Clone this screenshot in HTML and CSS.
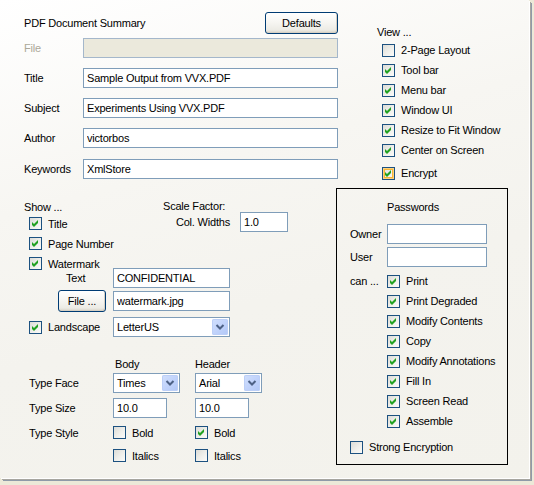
FILE: index.html
```html
<!DOCTYPE html>
<html>
<head>
<meta charset="utf-8">
<link rel="stylesheet" href="styles.css">
</head>
<body>
<div class="panel">
  <div class="top">
    <div class="summary">
      <div class="head-row"><span>PDF Document Summary</span><button class="btn btn-defaults">Defaults</button></div>
      <div class="field field-first disabled"><label>File</label><input class="txt txt-long" value="" disabled></div>
      <div class="field"><label>Title</label><input class="txt txt-long" value="Sample Output from VVX.PDF"></div>
      <div class="field"><label>Subject</label><input class="txt txt-long" value="Experiments Using VVX.PDF"></div>
      <div class="field"><label>Author</label><input class="txt txt-long" value="victorbos"></div>
      <div class="field field-last"><label>Keywords</label><input class="txt txt-long" value="XmlStore"></div>
    </div>
    <div class="view">
      <div class="view-title">View ...</div>
      <div class="cb-row"><span class="cb"></span><span>2-Page Layout</span></div>
      <div class="cb-row"><span class="cb on"><svg viewBox="0 0 11 11"><polygon points="2,4 4,6 8,2 8,5 4,9 2,7"/></svg></span><span>Tool bar</span></div>
      <div class="cb-row"><span class="cb on"><svg viewBox="0 0 11 11"><polygon points="2,4 4,6 8,2 8,5 4,9 2,7"/></svg></span><span>Menu bar</span></div>
      <div class="cb-row"><span class="cb on"><svg viewBox="0 0 11 11"><polygon points="2,4 4,6 8,2 8,5 4,9 2,7"/></svg></span><span>Window UI</span></div>
      <div class="cb-row"><span class="cb on"><svg viewBox="0 0 11 11"><polygon points="2,4 4,6 8,2 8,5 4,9 2,7"/></svg></span><span>Resize to Fit Window</span></div>
      <div class="cb-row"><span class="cb on"><svg viewBox="0 0 11 11"><polygon points="2,4 4,6 8,2 8,5 4,9 2,7"/></svg></span><span>Center on Screen</span></div>
      <div class="cb-row cb-row-encrypt"><span class="cb on hot"><svg viewBox="0 0 11 11"><polygon points="2,4 4,6 8,2 8,5 4,9 2,7"/></svg></span><span>Encrypt</span></div>
    </div>
  </div>
  <div class="bottom">
    <div class="options">
      <div class="show-block">
        <div class="show-col">
          <div class="group-title">Show ...</div>
          <div class="cb-line cb-line-first"><span class="cb on"><svg viewBox="0 0 11 11"><polygon points="2,4 4,6 8,2 8,5 4,9 2,7"/></svg></span><span>Title</span></div>
          <div class="cb-line"><span class="cb on"><svg viewBox="0 0 11 11"><polygon points="2,4 4,6 8,2 8,5 4,9 2,7"/></svg></span><span>Page Number</span></div>
          <div class="cb-line"><span class="cb on"><svg viewBox="0 0 11 11"><polygon points="2,4 4,6 8,2 8,5 4,9 2,7"/></svg></span><span>Watermark</span></div>
        </div>
        <div class="scale-col">
          <div class="scale-title">Scale Factor:</div>
          <div class="scale-row"><span>Col. Widths</span><input class="txt txt-scale" value="1.0"></div>
        </div>
      </div>
      <div class="row row-text"><span class="lead lead-text">Text</span><input class="txt txt-mid" value="CONFIDENTIAL"></div>
      <div class="row row-file"><span class="lead lead-file"><button class="btn btn-file">File ...</button></span><input class="txt txt-mid" value="watermark.jpg"></div>
      <div class="row row-land"><span class="lead lead-cb"><span class="cb on"><svg viewBox="0 0 11 11"><polygon points="2,4 4,6 8,2 8,5 4,9 2,7"/></svg></span><span>Landscape</span></span>
        <div class="select sel-mid"><span class="val">LetterUS</span><span class="drop"><svg viewBox="0 0 16 16"><polyline points="4.5,6 8,9.5 11.5,6"/></svg></span></div>
      </div>
      <div class="row row-colhead"><span class="lead"></span><span class="col col-body">Body</span><span class="col">Header</span></div>
      <div class="row row-face"><span class="lead lead-label">Type Face</span>
        <div class="col"><div class="select sel-short"><span class="val">Times</span><span class="drop"><svg viewBox="0 0 16 16"><polyline points="4.5,6 8,9.5 11.5,6"/></svg></span></div></div>
        <div class="col"><div class="select sel-short"><span class="val">Arial</span><span class="drop"><svg viewBox="0 0 16 16"><polyline points="4.5,6 8,9.5 11.5,6"/></svg></span></div></div>
      </div>
      <div class="row row-size"><span class="lead lead-label">Type Size</span>
        <div class="col"><input class="txt txt-size" value="10.0"></div>
        <div class="col"><input class="txt txt-size" value="10.0"></div>
      </div>
      <div class="row row-style"><span class="lead lead-label">Type Style</span>
        <div class="col cb-col"><span class="cb"></span><span>Bold</span></div>
        <div class="col cb-col"><span class="cb on"><svg viewBox="0 0 11 11"><polygon points="2,4 4,6 8,2 8,5 4,9 2,7"/></svg></span><span>Bold</span></div>
      </div>
      <div class="row row-italic"><span class="lead"></span>
        <div class="col cb-col"><span class="cb"></span><span>Italics</span></div>
        <div class="col cb-col"><span class="cb"></span><span>Italics</span></div>
      </div>
    </div>
    <div class="passwords">
      <div class="pw-title">Passwords</div>
      <div class="pw-row pw-owner"><span class="pw-lead">Owner</span><input class="txt txt-pw" value=""></div>
      <div class="pw-row pw-user"><span class="pw-lead">User</span><input class="txt txt-pw" value=""></div>
      <div class="perm perm-first"><span class="pw-lead">can ...</span><span class="cb on"><svg viewBox="0 0 11 11"><polygon points="2,4 4,6 8,2 8,5 4,9 2,7"/></svg></span><span>Print</span></div>
      <div class="perm"><span class="pw-lead"></span><span class="cb on"><svg viewBox="0 0 11 11"><polygon points="2,4 4,6 8,2 8,5 4,9 2,7"/></svg></span><span>Print Degraded</span></div>
      <div class="perm"><span class="pw-lead"></span><span class="cb on"><svg viewBox="0 0 11 11"><polygon points="2,4 4,6 8,2 8,5 4,9 2,7"/></svg></span><span>Modify Contents</span></div>
      <div class="perm"><span class="pw-lead"></span><span class="cb on"><svg viewBox="0 0 11 11"><polygon points="2,4 4,6 8,2 8,5 4,9 2,7"/></svg></span><span>Copy</span></div>
      <div class="perm"><span class="pw-lead"></span><span class="cb on"><svg viewBox="0 0 11 11"><polygon points="2,4 4,6 8,2 8,5 4,9 2,7"/></svg></span><span>Modify Annotations</span></div>
      <div class="perm"><span class="pw-lead"></span><span class="cb on"><svg viewBox="0 0 11 11"><polygon points="2,4 4,6 8,2 8,5 4,9 2,7"/></svg></span><span>Fill In</span></div>
      <div class="perm"><span class="pw-lead"></span><span class="cb on"><svg viewBox="0 0 11 11"><polygon points="2,4 4,6 8,2 8,5 4,9 2,7"/></svg></span><span>Screen Read</span></div>
      <div class="perm"><span class="pw-lead"></span><span class="cb on"><svg viewBox="0 0 11 11"><polygon points="2,4 4,6 8,2 8,5 4,9 2,7"/></svg></span><span>Assemble</span></div>
      <div class="strong"><span class="cb"></span><span>Strong Encryption</span></div>
    </div>
  </div>
</div>
</body>
</html>
```
FILE: styles.css
```css
html, body {
  margin: 0;
  padding: 0;
}
body {
  background: #ece9d8;
  font-family: "Liberation Sans", Arial, sans-serif;
  font-size: 11px;
  letter-spacing: -0.2px;
  color: #000;
  width: 534px;
  height: 485px;
  overflow: hidden;
}
.panel {
  width: 529px;
  height: 478px;
  box-sizing: border-box;
  padding-left: 24px;
  background: linear-gradient(165deg, #ffffff 0%, #f7f6f2 35%, #f4f3ee 60%, #f3f2ec 100%);
  box-shadow: 1px 1px 0 #ffffff, 2px 2px 0 #a7a6a0, 3px 3px 0 #8f9aa8;
}
input, button {
  font-family: inherit;
  font-size: 11px;
  letter-spacing: -0.2px;
  color: #000;
}
.txt {
  box-sizing: border-box;
  height: 20px;
  border: 1px solid #7f9db9;
  background: #fff;
  padding: 0 3px;
  margin: 0;
  outline: none;
}
.txt-long { width: 255px; }
.txt-mid { width: 117px; }
.txt-scale { width: 48px; }
.txt-size { width: 54px; }
.txt-pw { width: 100px; }

.btn {
  box-sizing: border-box;
  height: 22px;
  margin: 0;
  padding: 0;
  border: 1px solid #003c74;
  border-radius: 3px;
  background: linear-gradient(#ffffff 0%, #f6f5f1 50%, #ecebe5 85%, #d7d2c6 100%);
  box-shadow: inset -1px -1px 0 #d6d0c4;
}
.btn-defaults { width: 73px; }
.btn-file { width: 48px; }

/* Top section */
.top {
  display: flex;
  height: 188px;
}
.summary { width: 314px; }
.head-row {
  margin-top: 12px;
  height: 22px;
  display: flex;
  align-items: center;
  justify-content: space-between;
}
.field {
  display: flex;
  align-items: center;
  height: 20px;
  margin-top: 10px;
}
.field-first { margin-top: 4px; }
.field-last { margin-top: 11px; }
.field label { width: 59px; flex: none; }
.disabled label { color: #aca899; }
.disabled .txt {
  background: #ebe9dc;
  border-color: #a4b7cb;
}

.view {
  margin-left: 39px;
  padding-top: 25px;
}
.view-title {
  height: 15px;
  line-height: 14px;
}
.cb-row {
  display: flex;
  align-items: center;
  height: 20px;
  padding-left: 5px;
}
.cb-row-encrypt { margin-top: 3px; }

/* Checkbox */
.cb {
  flex: none;
  box-sizing: border-box;
  width: 13px;
  height: 13px;
  border: 1px solid #1c5180;
  background: linear-gradient(135deg, #dcdcd7 0%, #efefeb 55%, #fbfbf9 100%);
  margin-right: 6px;
  display: inline-flex;
}
.cb svg {
  width: 11px;
  height: 11px;
  display: block;
}
.cb svg polygon { fill: #21a121; }
.cb.hot {
  box-shadow: inset 0 0 0 1px #fcd27e, inset 0 0 0 2px #f8b636;
}

/* Bottom section */
.bottom { display: flex; }
.options { width: 312px; }

.show-block {
  display: flex;
  margin-top: 12px;
  height: 68px;
}
.show-col { width: 139px; }
.group-title {
  height: 14px;
  line-height: 14px;
}
.cb-line {
  display: flex;
  align-items: center;
  height: 13px;
  margin-top: 7px;
  padding-left: 5px;
}
.cb-line-first { margin-top: 3px; }
.scale-col { width: 125px; }
.scale-title {
  height: 12px;
  line-height: 12px;
}
.scale-row {
  display: flex;
  align-items: center;
  justify-content: flex-end;
  height: 20px;
}
.scale-row .txt { margin-left: 10px; }

.row {
  display: flex;
  align-items: center;
}
.lead {
  flex: none;
  width: 89px;
  display: flex;
  align-items: center;
}
.lead-text { padding-left: 42px; box-sizing: border-box; }
.lead-file { padding-left: 34px; box-sizing: border-box; }
.lead-cb { padding-left: 5px; box-sizing: border-box; }
.lead-label { padding-left: 5px; box-sizing: border-box; }
.row-text { height: 20px; }
.row-file { height: 22px; margin-top: 2px; }
.row-land { height: 20px; margin-top: 5px; }
.row-colhead { height: 14px; margin-top: 20px; }
.row-face { height: 20px; margin-top: 2px; }
.row-size { height: 20px; margin-top: 5px; }
.row-style { height: 13px; margin-top: 8px; }
.row-italic { height: 13px; margin-top: 10px; }
.col {
  flex: none;
  width: 82px;
  display: flex;
  align-items: center;
}
.col-body { padding-left: 2px; box-sizing: border-box; }

.select {
  box-sizing: border-box;
  height: 20px;
  border: 1px solid #7f9db9;
  background: #fff;
  display: flex;
  align-items: center;
  padding-left: 3px;
}
.sel-mid { width: 117px; }
.sel-short { width: 67px; }
.select .val { flex: 1; }
.drop {
  flex: none;
  width: 16px;
  height: 16px;
  margin-right: 1px;
  border-radius: 2px;
  background: linear-gradient(135deg, #d2e0fd 0%, #c1d3fb 50%, #b1c7f6 100%);
  box-shadow: inset 0 0 0 1px #bccff7;
  display: flex;
  align-items: center;
  justify-content: center;
}
.drop svg { width: 16px; height: 16px; display: block; }
.drop polyline {
  fill: none;
  stroke: #4d6185;
  stroke-width: 2;
}

/* Passwords box */
.passwords {
  box-sizing: border-box;
  width: 172px;
  height: 277px;
  border: 1px solid #000;
  padding-left: 13px;
}
.pw-title {
  margin-top: 11px;
  margin-left: 37px;
  height: 14px;
  line-height: 14px;
}
.pw-row {
  display: flex;
  align-items: center;
  height: 20px;
}
.pw-owner { margin-top: 10px; }
.pw-user { margin-top: 3px; }
.pw-lead { flex: none; width: 37px; }
.perm {
  display: flex;
  align-items: center;
  height: 20px;
}
.perm-first { margin-top: 4px; }
.strong {
  display: flex;
  align-items: center;
  height: 20px;
  margin-top: 6px;
}
```
